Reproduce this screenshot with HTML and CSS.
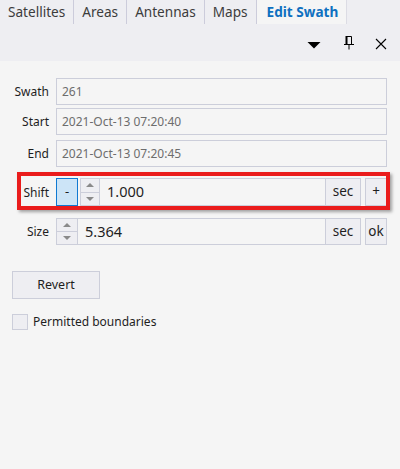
FILE: index.html
```html
<!DOCTYPE html>
<html>
<head>
<meta charset="utf-8">
<link rel="stylesheet" href="styles.css">
</head>
<body>
<div class="tabs">
  <div class="tab">Satellites</div>
  <div class="tab">Areas</div>
  <div class="tab">Antennas</div>
  <div class="tab">Maps</div>
  <div class="tab active">Edit Swath</div>
</div>
<div class="toolbar">
  <svg class="ico-drop" width="14" height="8" viewBox="0 0 14 8"><path d="M0.5 1 L13.5 1 L7 7.5 Z" fill="#000"/></svg>
  <svg class="ico-pin" width="12" height="14" viewBox="0 0 12 14"><path d="M3 0.5 H8.5 V8" fill="none" stroke="#000" stroke-width="1"/><rect x="2.5" y="0" width="2" height="8.5" fill="#000"/><rect x="1" y="8" width="10" height="1" fill="#000"/><rect x="5.5" y="8" width="1" height="5.5" fill="#000"/></svg>
  <svg class="ico-close" width="12" height="12" viewBox="0 0 12 12"><path d="M1 1 L11 11 M11 1 L1 11" stroke="#000" stroke-width="1.1"/></svg>
</div>
<div class="panel">
  <div class="row r-swath"><span class="lbl">Swath</span><div class="field">261</div></div>
  <div class="row r-start"><span class="lbl">Start</span><div class="field">2021-Oct-13 07:20:40</div></div>
  <div class="row r-end"><span class="lbl">End</span><div class="field">2021-Oct-13 07:20:45</div></div>
  <div class="row r-shift">
    <span class="lbl">Shift</span>
    <div class="ctrl">
      <div class="minus">-</div>
      <div class="spin spin-shift"><span class="up"></span><span class="down"></span></div>
      <div class="value">1.000</div>
      <div class="unit">sec</div>
      <div class="small-btn">+</div>
    </div>
  </div>
  <div class="row r-size">
    <span class="lbl">Size</span>
    <div class="ctrl">
      <div class="spin spin-size"><span class="up"></span><span class="down"></span></div>
      <div class="value">5.364</div>
      <div class="unit">sec</div>
      <div class="small-btn">ok</div>
    </div>
  </div>
  <div class="revert">Revert</div>
  <div class="check-row"><span class="checkbox"></span><span class="check-lbl">Permitted boundaries</span></div>
</div>
</body>
</html>
```
FILE: styles.css
```css
* { box-sizing: border-box; }
html, body { margin: 0; padding: 0; }
body {
  width: 400px;
  height: 469px;
  background: #f5f5f5;
  font-family: "Noto Sans", "Open Sans", sans-serif;
  color: #1e1e1e;
  overflow: hidden;
}
.tabs {
  display: flex;
  height: 24px;
  background: #eeeef2;
}
.tab {
  padding: 0 8px 0 8px;
  font-size: 13.6px;
  line-height: 24px;
  color: #3c3c3c;
  border-right: 1px solid #ccccdb;
  height: 24px;
}
.tab.active {
  background: #f5f5f5;
  color: #0e70c0;
  font-weight: bold;
  padding: 0 8px 0 10px;
  border-right: 1px solid #dcdce4;
}
.toolbar {
  height: 37px;
  background: #eeeef2;
  display: flex;
  align-items: center;
  justify-content: flex-end;
  padding-right: 13px;
}
.ico-drop { margin-right: 22px; margin-top: 4px; }
.ico-pin { margin-right: 20px; }
.ico-close { margin-top: 2px; }
.panel {
  padding: 17px 13px 0 12px;
}
.row {
  display: flex;
  align-items: center;
  gap: 7px;
}
.lbl {
  width: 37px;
  text-align: right;
  font-size: 12px;
  flex: none;
}
.field {
  flex: 1;
  height: 27px;
  border: 1px solid #ccceda;
  background: #f5f5f5;
  font-size: 12px;
  color: #6d6d6d;
  padding-left: 5px;
  line-height: 25px;
}
.r-start { margin-top: 3px; }
.r-end { margin-top: 5px; }
.r-shift { margin-top: 11px; position: relative; height: 28px; }
.r-shift::after {
  content: "";
  position: absolute;
  left: 5px;
  right: -3px;
  top: -6px;
  bottom: -4px;
  border: 4px solid #ea1c1c;
  box-shadow: 2px 2px 3px rgba(0, 0, 0, 0.35);
  pointer-events: none;
}
.r-size { margin-top: 12px; height: 27px; }
.ctrl {
  flex: 1;
  display: flex;
  height: 100%;
}
.minus {
  width: 22px;
  background: #cce4f7;
  border: 1px solid #1079d2;
  font-size: 13px;
  text-align: center;
  line-height: 24px;
  margin-right: 2px;
}
.spin {
  width: 19px;
  display: flex;
  flex-direction: column;
  border: 1px solid #ccceda;
  border-right: none;
  background: #eeeef2;
}
.spin-size { width: 21px; }
.spin span {
  flex: 1;
  display: flex;
  align-items: center;
  justify-content: center;
}
.spin .up { border-bottom: 1px solid #ccceda; }
.spin .up::before {
  content: "";
  border-left: 4px solid transparent;
  border-right: 4px solid transparent;
  border-bottom: 4px solid #8a8a8a;
}
.spin .down::before {
  content: "";
  border-left: 4px solid transparent;
  border-right: 4px solid transparent;
  border-top: 4px solid #8a8a8a;
}
.value {
  flex: 1;
  border: 1px solid #ccceda;
  background: #f5f5f5;
  font-size: 14.5px;
  line-height: 25px;
  padding-left: 7px;
  color: #1e1e1e;
}
.unit {
  width: 35px;
  border: 1px solid #ccceda;
  border-left: none;
  background: #eeeef2;
  font-size: 13.5px;
  text-align: center;
  line-height: 24px;
  color: #1e1e1e;
  margin-right: 4px;
}
.small-btn {
  width: 22px;
  border: 1px solid #ccceda;
  background: #eeeef2;
  font-size: 13.5px;
  text-align: center;
  line-height: 24px;
}
.revert {
  margin-top: 26px;
  width: 88px;
  height: 28px;
  border: 1px solid #ccceda;
  background: #eeeef2;
  font-size: 12.5px;
  line-height: 26px;
  text-align: center;
}
.check-row {
  margin-top: 14px;
  display: flex;
  align-items: center;
  gap: 5px;
}
.checkbox {
  width: 16px;
  height: 16px;
  border: 1px solid #ccceda;
  background: #eeeef2;
}
.check-lbl { font-size: 12px; }
```
